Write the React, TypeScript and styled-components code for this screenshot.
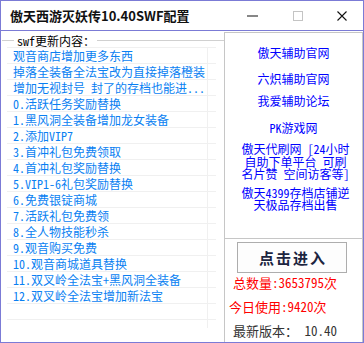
import React from "react";
import styled, { createGlobalStyle } from "styled-components";

const Global = createGlobalStyle`
  html, body { margin: 0; padding: 0; background: #fff; }
  body { font-family: "Noto Sans Mono CJK SC", "Noto Sans CJK SC", "Noto Sans", sans-serif; }
  * { box-sizing: border-box; }
`;

const Window = styled.div`
  width: 364px;
  height: 343px;
  border: 1px solid #7b7bd6;
  display: flex;
  flex-direction: column;
  background: #fff;
  overflow: hidden;
`;

const TitleBar = styled.div`
  height: 30px;
  flex: none;
  border-bottom: 1px solid #7b7bd6;
  display: flex;
  align-items: center;
  padding-left: 9px;
`;

const Title = styled.div`
  font-family: "Noto Sans CJK SC", sans-serif;
  font-size: 13px;
  font-weight: 700;
  color: #111;
  line-height: 14px;
  margin-top: 1px;
  flex: 1;
`;

const Controls = styled.div`
  display: flex;
  align-items: center;
  height: 100%;
`;

const CtrlBtn = styled.div<{ $w: number }>`
  width: ${(p) => p.$w}px;
  height: 100%;
  display: flex;
  align-items: center;
  justify-content: center;
`;

const Body = styled.div`
  flex: 1;
  display: flex;
  min-height: 0;
`;

const LeftPane = styled.div`
  width: 223px;
  flex: none;
  display: flex;
  flex-direction: column;
  padding-top: 4px;
`;

const GroupHeader = styled.div`
  display: flex;
  align-items: center;
  height: 11px;
  margin-bottom: 1px;
  padding-left: 1px;
`;

const GroupLine = styled.div<{ $w?: number }>`
  height: 1px;
  background: #d0d0d0;
  ${(p) => (p.$w ? `width: ${p.$w}px; flex: none;` : "flex: 1;")}
`;

const GroupLabel = styled.div`
  font-size: 12px;
  line-height: 11px;
  color: #000;
  padding: 0 2px 0 3px;
`;

const List = styled.div`
  margin-left: 6px;
  width: 209px;
  border-top: 1px solid #f0f0f0;
  flex: 1;
  overflow: hidden;
`;

const Row = styled.div<{ $last?: boolean }>`
  display: flex;
  height: ${(p) => (p.$last ? 8 : 16)}px;
  border-bottom: ${(p) => (p.$last ? "none" : "1px solid #f0f0f0")};
`;

const Cell = styled.div`
  width: 201px;
  flex: none;
  border-right: 1px solid #f0f0f0;
  padding-left: 6px;
  font-size: 12px;
  line-height: 15px;
  color: #0a7ff2;
  white-space: nowrap;
  overflow: hidden;
`;

const RightPane = styled.div`
  flex: 1;
  margin-top: 1px;
  border-left: 1px solid #c6c6c6;
  border-right: 1px solid #c6c6c6;
  border-top: 1px solid #c6c6c6;
  display: flex;
  flex-direction: column;
`;

const LinksPanel = styled.div`
  height: 206px;
  border-bottom: 1px solid #c6c6c6;
  display: flex;
  flex-direction: column;
  padding-top: 14px;
`;

const LinkText = styled.div<{ $mt: number; $dx: number }>`
  margin-top: ${(p) => p.$mt}px;
  padding-left: ${(p) => p.$dx}px;
  font-size: 12px;
  line-height: 12.5px;
  color: #0000ff;
  text-align: center;
  white-space: pre-line;
  cursor: pointer;
`;

const Bottom = styled.div`
  flex: 1;
  display: flex;
  flex-direction: column;
  padding-top: 3px;
`;

const EnterButton = styled.button`
  margin-left: 12px;
  width: 110px;
  height: 31px;
  border: 1px solid #adadad;
  background: #fdfdfd;
  font-family: "Noto Sans CJK SC", sans-serif;
  font-size: 15px;
  font-weight: 700;
  color: #1c2540;
  letter-spacing: 2px;
  padding: 0 0 0 2px;
  line-height: 29px;
`;

const Stat = styled.div<{ $mt: number; $dx: number; $color: string }>`
  margin-top: ${(p) => p.$mt}px;
  padding-left: ${(p) => p.$dx}px;
  font-size: 13px;
  line-height: 16px;
  color: ${(p) => p.$color};
  white-space: nowrap;
`;

const items = [
  "观音商店增加更多东西",
  "掉落全装备全法宝改为直接掉落橙装",
  "增加无视封号 封了的存档也能进...",
  "0.活跃任务奖励替换",
  "1.黑风洞全装备增加龙女装备",
  "2.添加VIP7",
  "3.首冲礼包免费领取",
  "4.首冲礼包奖励替换",
  "5.VIP1-6礼包奖励替换",
  "6.免费银锭商城",
  "7.活跃礼包免费领",
  "8.全人物技能秒杀",
  "9.观音购买免费",
  "10.观音商城道具替换",
  "11.双叉岭全法宝+黑风洞全装备",
  "12.双叉岭全法宝增加新法宝",
  "",
];

const links: { text: string; mt: number; dx: number }[] = [
  { text: "傲天辅助官网", mt: 0, dx: -9 },
  { text: "六炽辅助官网", mt: 13, dx: -6 },
  { text: "我爱辅助论坛", mt: 10, dx: -2 },
  { text: "PK游戏网", mt: 14, dx: -4 },
  { text: "傲天代刷网 [24小时\n自助下单平台 可刷\n名片赞 空间访客等]", mt: 9, dx: 4 },
  { text: "傲天4399存档店铺逆\n天极品存档出售", mt: 6, dx: 4 },
];

export default function App() {
  return (
    <>
      <Global />
      <Window>
        <TitleBar>
          <Title>傲天西游灭妖传10.40SWF配置</Title>
          <Controls>
            <CtrlBtn $w={46}>
              <svg width="11" height="2" viewBox="0 0 11 2">
                <rect x="0" y="0.5" width="11" height="1" fill="#111" />
              </svg>
            </CtrlBtn>
            <CtrlBtn $w={46}>
              <svg width="10" height="10" viewBox="0 0 10 10">
                <rect x="0.5" y="0.5" width="9" height="9" fill="none" stroke="#c4c4c4" strokeWidth="1" />
              </svg>
            </CtrlBtn>
            <CtrlBtn $w={42}>
              <svg width="10" height="10" viewBox="0 0 10 10">
                <path d="M0.5 0.5 L9.5 9.5 M9.5 0.5 L0.5 9.5" stroke="#111" strokeWidth="1.1" />
              </svg>
            </CtrlBtn>
          </Controls>
        </TitleBar>
        <Body>
          <LeftPane>
            <GroupHeader>
              <GroupLine $w={12} />
              <GroupLabel>swf更新内容：</GroupLabel>
              <GroupLine />
            </GroupHeader>
            <List>
              {items.map((t, i) => (
                <Row key={i}>
                  <Cell>{t}</Cell>
                </Row>
              ))}
              <Row $last>
                <Cell />
              </Row>
            </List>
          </LeftPane>
          <RightPane>
            <LinksPanel>
              {links.map((l, i) => (
                <LinkText key={i} $mt={l.mt} $dx={l.dx}>
                  {l.text}
                </LinkText>
              ))}
            </LinksPanel>
            <Bottom>
              <EnterButton>点击进入</EnterButton>
              <Stat $mt={2} $dx={8} $color="#ff0000">总数量:3653795次</Stat>
              <Stat $mt={8} $dx={4} $color="#ff0000">今日使用:9420次</Stat>
              <Stat $mt={8} $dx={8} $color="#333">最新版本： 10.40</Stat>
            </Bottom>
          </RightPane>
        </Body>
      </Window>
    </>
  );
}
